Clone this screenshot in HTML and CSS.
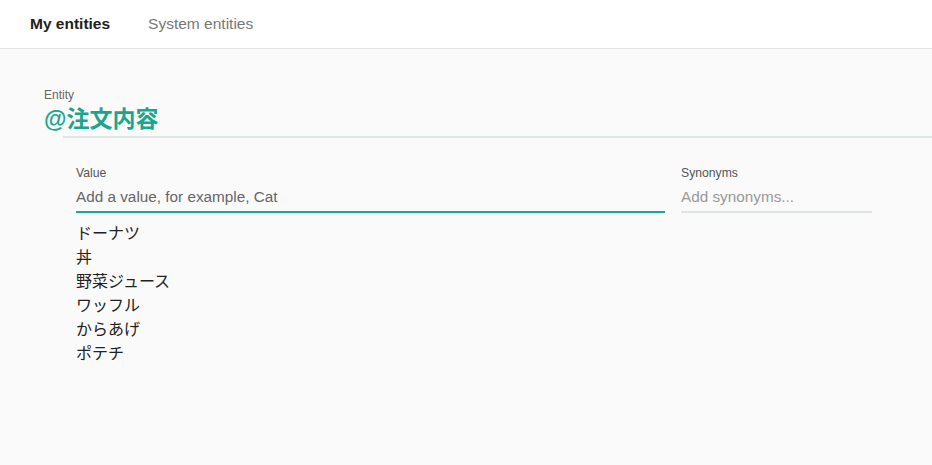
FILE: index.html
```html
<!DOCTYPE html>
<html lang="ja">
<head>
    <meta charset="UTF-8">
    <meta name="viewport" content="width=device-width, initial-scale=1.0">
    <title>Entities</title>
    <link rel="stylesheet" href="styles.css">
</head>
<body>
    <header class="tabs">
        <a class="tab tab-active" href="#">My entities</a>
        <a class="tab" href="#">System entities</a>
    </header>

    <main class="entity">
        <div class="entity-label">Entity</div>
        <div class="entity-name">@注文内容</div>

        <div class="values">
            <div class="fields">
                <div class="field field-value">
                    <label class="field-label" for="valueInput">Value</label>
                    <input id="valueInput" class="field-input" type="text" placeholder="Add a value, for example, Cat">
                </div>
                <div class="field field-synonyms">
                    <label class="field-label" for="synInput">Synonyms</label>
                    <input id="synInput" class="field-input" type="text" placeholder="Add synonyms...">
                </div>
            </div>

            <ul class="value-list">
                <li>ドーナツ</li>
                <li>丼</li>
                <li>野菜ジュース</li>
                <li>ワッフル</li>
                <li>からあげ</li>
                <li>ポテチ</li>
            </ul>
        </div>
    </main>
</body>
</html>
```

FILE: styles.css
```css
body {
    margin: 0;
    min-height: 100vh;
    background: #fafafa;
    font-family: 'Liberation Sans', Arial, 'Noto Sans CJK JP', sans-serif;
    color: #222;
}

/* onglets du haut */
.tabs {
    display: flex;
    gap: 38px;
    height: 49px;
    box-sizing: border-box;
    padding: 14px 0 0 30px;
    background: #fff;
    border-bottom: 1px solid #e2e2e2;
}

.tab {
    font-size: 15.5px;
    line-height: 20px;
    color: #777;
    text-decoration: none;
}

.tab-active {
    font-weight: bold;
    color: #222;
}

.entity {
    padding: 39px 0 0 44px;
}

.entity-label {
    font-size: 12px;
    line-height: 14px;
    color: #666;
}

.entity-name {
    position: relative;
    margin-top: 3px;
    padding-bottom: 5px;
    font-size: 23px;
    line-height: 28px;
    font-weight: bold;
    color: #18a78d;
}

.entity-name::after {
    content: '';
    position: absolute;
    left: 19px;
    right: 0;
    bottom: 0;
    height: 2px;
    background: #dce8e5;
}

.values {
    padding: 28px 0 0 32px;
}

.fields {
    display: flex;
    gap: 16px;
}

.field-value {
    width: 589px;
}

.field-synonyms {
    width: 191px;
}

.field-label {
    display: block;
    font-size: 12.2px;
    line-height: 14px;
    color: #555;
    margin-bottom: 7px;
}

.field-input {
    display: block;
    width: 100%;
    box-sizing: border-box;
    padding: 0 0 4px;
    border: none;
    border-bottom: 2px solid #e0e6e5;
    background: transparent;
    font-family: inherit;
    font-size: 15.3px;
    line-height: 20px;
    color: #222;
    outline: none;
}

.field-input::placeholder {
    color: #999;
}

.field-value .field-input {
    border-bottom-color: #19a890;
}

.field-value .field-input::placeholder {
    color: #666;
}

.value-list {
    list-style: none;
    margin: 9px 0 0;
    padding: 0;
    font-size: 16px;
    line-height: 24px;
    color: #222;
}
```
